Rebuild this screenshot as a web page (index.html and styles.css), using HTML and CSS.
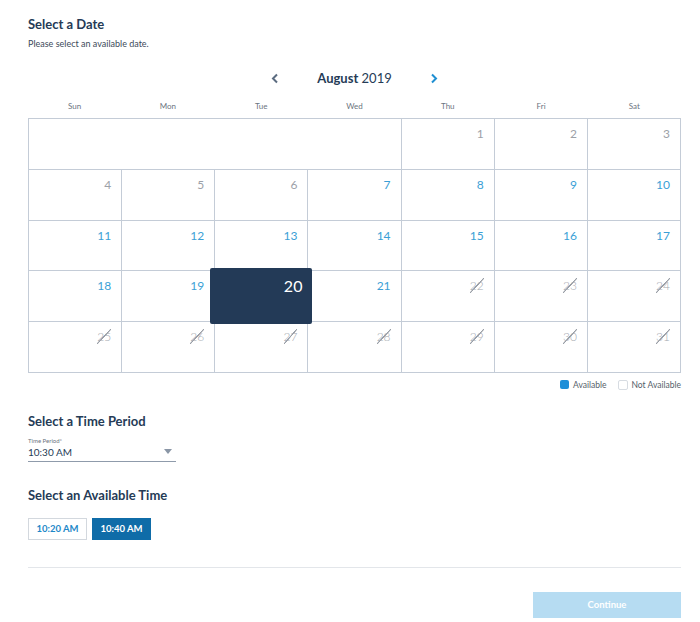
FILE: index.html
```html
<!DOCTYPE html>
<html lang="en">
<head>
    <meta charset="UTF-8">
    <meta name="viewport" content="width=device-width, initial-scale=1.0">
    <title>Select a Date</title>
    <link rel="stylesheet" href="styles.css">
</head>
<body>
    <div class="page">
        <h2 class="title">Select a Date</h2>
        <p class="hint">Please select an available date.</p>

        <div class="month-nav">
            <span class="arrow prev">
                <svg width="8" height="11" viewBox="0 0 8 11"><path d="M6 1.5 L2 5.5 L6 9.5" fill="none" stroke="#5c6c80" stroke-width="2"/></svg>
            </span>
            <span class="month"><b>August</b> 2019</span>
            <span class="arrow next">
                <svg width="8" height="11" viewBox="0 0 8 11"><path d="M2 1.5 L6 5.5 L2 9.5" fill="none" stroke="#1f8fd2" stroke-width="2"/></svg>
            </span>
        </div>

        <div class="weekdays">
            <span>Sun</span><span>Mon</span><span>Tue</span><span>Wed</span><span>Thu</span><span>Fri</span><span>Sat</span>
        </div>

        <div class="calendar">
            <div class="day blank"></div>
            <div class="day past"><span>1</span></div>
            <div class="day past"><span>2</span></div>
            <div class="day past"><span>3</span></div>
            <div class="day past"><span>4</span></div>
            <div class="day past"><span>5</span></div>
            <div class="day past"><span>6</span></div>
            <div class="day open"><span>7</span></div>
            <div class="day open"><span>8</span></div>
            <div class="day open"><span>9</span></div>
            <div class="day open"><span>10</span></div>
            <div class="day open"><span>11</span></div>
            <div class="day open"><span>12</span></div>
            <div class="day open"><span>13</span></div>
            <div class="day open"><span>14</span></div>
            <div class="day open"><span>15</span></div>
            <div class="day open"><span>16</span></div>
            <div class="day open"><span>17</span></div>
            <div class="day open"><span>18</span></div>
            <div class="day open"><span>19</span></div>
            <div class="day selected"><div class="pick">20</div></div>
            <div class="day open"><span>21</span></div>
            <div class="day closed"><span>22</span></div>
            <div class="day closed"><span>23</span></div>
            <div class="day closed"><span>24</span></div>
            <div class="day closed"><span>25</span></div>
            <div class="day closed"><span>26</span></div>
            <div class="day closed"><span>27</span></div>
            <div class="day closed"><span>28</span></div>
            <div class="day closed"><span>29</span></div>
            <div class="day closed"><span>30</span></div>
            <div class="day closed"><span>31</span></div>
        </div>

        <div class="legend">
            <span class="swatch on"></span> Available
            <span class="swatch off"></span> Not Available
        </div>

        <h2 class="title period-title">Select a Time Period</h2>
        <div class="select">
            <label>Time Period*</label>
            <div class="select-value">
                <span>10:30 AM</span>
                <svg width="8" height="5" viewBox="0 0 8 5"><path d="M0 0 H8 L4 5 Z" fill="#8a96a6"/></svg>
            </div>
        </div>

        <h2 class="title time-title">Select an Available Time</h2>
        <div class="times">
            <button class="time">10:20 AM</button>
            <button class="time active">10:40 AM</button>
        </div>

        <hr class="divider">

        <div class="footer">
            <button class="continue">Continue</button>
        </div>
    </div>
</body>
</html>
```

FILE: styles.css
```css
body {
    margin: 0;
    font-family: Lato, "Open Sans", sans-serif;
    color: #253b56;
    background-color: #fff;
}

.page {
    padding: 16px 19px 0 28px;
}

.title {
    margin: 0;
    font-size: 13px;
    font-weight: 700;
    color: #253b56;
}

.hint {
    margin: 6px 0 0;
    font-size: 9px;
    color: #3d4a5a;
}

/* month header */
.month-nav {
    display: flex;
    justify-content: center;
    align-items: center;
    gap: 38px;
    margin-top: 20px;
    height: 18px;
}
.arrow {
    display: flex;
}
.month {
    font-size: 13px;
    color: #253b56;
}

.weekdays {
    display: grid;
    grid-template-columns: repeat(7, 1fr);
    margin-top: 14px;
    font-size: 8px;
    color: #6b7480;
    text-align: center;
}

/* calendar grid */
.calendar {
    display: grid;
    grid-template-columns: repeat(7, 1fr);
    grid-auto-rows: 49.8px;
    gap: 1px;
    padding: 1px;
    margin-top: 7px;
    background-color: #c4ccd7;
}
.day {
    background-color: #fff;
    text-align: right;
    padding: 7px 10px 0 0;
    font-size: 12px;
    position: relative;
}
.day.blank {
    grid-column: span 4;
}
.past {
    color: #9ca1a8;
}
.open {
    color: #3b9fd6;
}
.closed {
    color: #a5a9b0;
    font-weight: 300;
}
.closed span {
    background: linear-gradient(to bottom right, transparent 46%, #9a9fa7 48%, #9a9fa7 52%, transparent 54%);
}
.pick {
    position: absolute;
    top: -3px;
    left: -5px;
    right: -5px;
    bottom: -3px;
    z-index: 1;
    background-color: #233a57;
    border-radius: 2px;
    color: #fff;
    font-size: 16px;
    padding: 8px 10px 0 0;
}

.legend {
    display: flex;
    justify-content: flex-end;
    align-items: center;
    gap: 4px;
    margin-top: 7px;
    font-size: 8.5px;
    color: #555e6a;
}
.swatch {
    width: 9px;
    height: 9px;
    border-radius: 2px;
}
.swatch.on {
    background-color: #1f8fd8;
}
.swatch.off {
    margin-left: 7px;
    border: 1px solid #d7dce2;
    width: 8px;
    height: 8px;
}

/* time period */
.period-title {
    margin-top: 23px;
}
.select {
    width: 148px;
    margin-top: 8px;
    border-bottom: 1px solid #8f9bab;
}
.select label {
    display: block;
    font-size: 6px;
    color: #6b7480;
}
.select-value {
    display: flex;
    justify-content: space-between;
    align-items: center;
    font-size: 10px;
    padding: 2px 4px 3px 0;
    color: #253b56;
}

.time-title {
    margin-top: 25px;
}
.times {
    display: flex;
    gap: 5px;
    margin-top: 15px;
}
.time {
    font-family: Lato, sans-serif;
    height: 22px;
    width: 59px;
    padding: 0;
    font-size: 9.5px;
    font-weight: 700;
    border: 1px solid #d3d8de;
    background-color: #fff;
    color: #1e88c8;
}
.time.active {
    background-color: #0f6ca8;
    border-color: #0f6ca8;
    color: #fff;
}

.divider {
    margin: 27px 0 0;
    border: none;
    border-top: 1px solid #e3e6ea;
}

.footer {
    display: flex;
    justify-content: flex-end;
    margin-top: 24px;
}
.continue {
    font-family: Lato, sans-serif;
    width: 148px;
    height: 26px;
    border: none;
    background-color: #b6dcf2;
    color: #fff;
    font-size: 9.5px;
    font-weight: 700;
}
```
